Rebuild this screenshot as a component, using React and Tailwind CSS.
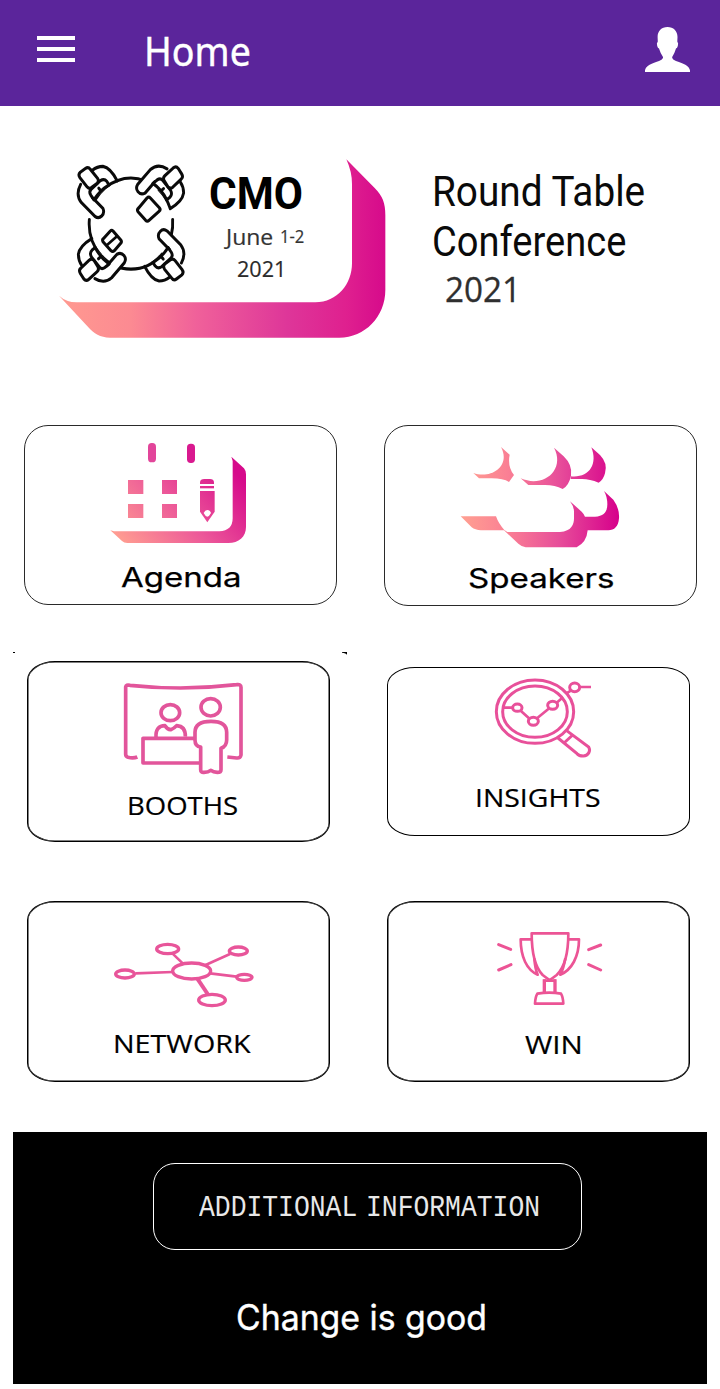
import React, { useLayoutEffect, useRef, useState } from 'react';
import clsx from 'clsx';

// Single line of text stretched or squeezed to the width of its box
function FitText({ className, children }) {
  const boxRef = useRef(null);
  const textRef = useRef(null);
  const [ratio, setRatio] = useState(1);

  useLayoutEffect(() => {
    setRatio(boxRef.current.getBoundingClientRect().width / textRef.current.offsetWidth);
  }, []);

  return (
    <div ref={boxRef} className={clsx('whitespace-nowrap', className)}>
      <span ref={textRef} className="inline-block origin-left" style={{ transform: `scaleX(${ratio})` }}>
        {children}
      </span>
    </div>
  );
}

function Header() {
  return (
    <header className="flex h-[106px] items-start bg-[#5b259b]">
      <button type="button" aria-label="Menu" className="mt-9 ml-[37px] flex w-[38px] flex-col gap-[7px]">
        <span className="h-1 bg-white" />
        <span className="h-1 bg-white" />
        <span className="h-1 bg-white" />
      </button>
      <h1 className="mt-[26px] ml-[69px]">
        <FitText className="w-[107px] font-['Noto_Sans',sans-serif] text-[40px] leading-[50px] text-white [-webkit-text-stroke:0.4px]">Home</FitText>
      </h1>
      <svg className="mt-[26px] mr-[29px] ml-auto" width="47" height="47" viewBox="644 26 47 47" fill="#fff">
        <path d="M667.5 27 C661.5 27 657.6 31 657.6 37 L657.8 41.5 Q656.3 43 657.2 46 Q657.8 48 659 48.5 Q660.500 53.500 663 57 V58 Q662 60 659 61 C651 63.500 645.5 66 645 70.5 V72 H690 V70.5 C689.5 66 684 63.500 676 61 Q673 60 672.200 58 V57 Q674.5 53.500 676 48.5 Q677.2 48 677.8 46 Q678.7 43 677.3 41.5 L677.5 37 C677.5 31 673.5 27 667.5 27Z" />
      </svg>
    </header>
  );
}

function Hand({ turn }) {
  return (
    <g transform={turn}>
      <path d="M-121 -154 Q-106 -165 -88 -165 Q-64 -161 -43 -123" />
      <path d="M-158 -113 C-169 -94 -168 -76 -156 -61 L-113 -21 C-98 -11 -80 -26 -88 -44 L-121 -75" fill="#fff" />
      <path d="M-116 -69 L-126 -82 Q-133 -92 -125 -99 L-96 -124 Q-84 -131 -76 -122 L-69 -112" fill="#fff" />
      <path d="M-116 -69 Q-98 -96 -69 -112" />
      <path d="M-101 -102 L-95 -95" />
      <path d="M-159 -148 L-143 -159 Q-134 -165 -128 -157 L-105 -131 Q-99 -123 -106 -116 L-124 -104 Q-132 -99 -138 -106 L-160 -132 Q-167 -141 -159 -148Z" fill="#fff" />
    </g>
  );
}

function RoundTableLogo() {
  return (
    <svg width="112" height="122" viewBox="75 38 336 366" fill="none" stroke="#0a0a0a" strokeWidth="9" strokeLinecap="round" strokeLinejoin="round">
      <g transform="translate(243 220) scale(0.957 1.042)">
        <path d="M-110 -72 A131 131 0 0 1 45 -123" />
        <path d="M88 -97 A131 131 0 0 1 122 -46" />
        <path d="M130.500 -12 A131 131 0 0 1 126 34" />
        <path d="M97 88 A131 131 0 0 1 -97 88" />
        <path d="M-130.500 -12 A131 131 0 0 0 -97 88" />
        <Hand />
        <Hand turn="rotate(90)" />
        <Hand turn="rotate(180)" />
        <Hand turn="rotate(270)" />
      </g>
      <path d="M291 143 Q296 138 301 143 L328 172 Q333 178 327 183 L297 210 Q292 215 287 210 L264 184 Q260 178 266 173Z" />
      <path d="M181 242 Q185 238 189 242 L213 270 Q216 275 212 279 L193 301 Q188 306 183 301 L159 274 Q156 269 160 265Z" />
      <path d="M172 283 L201 258" strokeWidth="8" />
    </svg>
  );
}

function Banner() {
  return (
    <section className="flex h-[319px] items-start pt-[49px] pl-[55px]">
      <div className="relative flex h-[190px] w-[336px] items-start">
        <svg className="absolute top-0 left-0" width="336" height="190" viewBox="15 15 1008 570">
          <defs>
            <linearGradient id="banner" gradientUnits="userSpaceOnUse" x1="27" y1="0" x2="1006" y2="0">
              <stop offset="0" stopColor="#ff9a90" />
              <stop offset="0.22" stopColor="#fc8a92" />
              <stop offset="0.42" stopColor="#f0619a" />
              <stop offset="0.7" stopColor="#de3699" />
              <stop offset="0.88" stopColor="#df208f" />
              <stop offset="1" stopColor="#d60a8b" />
            </linearGradient>
          </defs>
          <path fill="url(#banner)" d="M27 437 Q48 456 80 457 H796 C862 457 906 402 906 340 V102 Q906 65 889 28 L974 114 C998 138 1006 160 1006 195 V420 C1006 500 945 563 868 563 H180 C150 563 132 551 115 532Z" />
        </svg>
        <div className="relative mt-[8px] ml-5">
          <RoundTableLogo />
        </div>
        <div className="relative mt-4 ml-[22px]">
          <FitText className="w-[94px] font-[Roboto,sans-serif] text-[45px] leading-[46px] font-bold text-black">CMO</FitText>
          <div className="ml-[17px] flex h-8 items-start text-[#333]">
            <FitText className="mt-[4px] w-[47px] font-['Open_Sans',sans-serif] text-[22px] leading-[30px] [-webkit-text-stroke:0.2px]">June</FitText>
            <FitText className="mt-[4px] ml-[7px] w-[24px] font-['Open_Sans',sans-serif] text-[18px] leading-[31px] [-webkit-text-stroke:0.2px]">1-2</FitText>
          </div>
          <FitText className="mt-[4px] ml-[28px] w-[49px] font-['Open_Sans',sans-serif] text-[22px] leading-[30px] text-[#2b2b2b] [-webkit-text-stroke:0.2px]">2021</FitText>
        </div>
      </div>
      <div className="mt-[12px] ml-[41px] text-[#0a0a0a]">
        <FitText className="w-[213px] font-[Roboto,sans-serif] text-[42px] leading-[50px]">Round Table</FitText>
        <FitText className="w-[194px] font-[Roboto,sans-serif] text-[42px] leading-[50px]">Conference</FitText>
        <FitText className="ml-[13px] w-[76px] font-['Open_Sans',sans-serif] text-[35px] leading-[44px] text-[#2f2f2f] [-webkit-text-stroke:0.3px]">2021</FitText>
      </div>
    </section>
  );
}

function AgendaIcon({ className }) {
  return (
    <svg className={className} width="144" height="107" viewBox="288 75 432 321">
      <defs>
        <linearGradient id="agenda" gradientUnits="userSpaceOnUse" x1="340" y1="390" x2="640" y2="130">
          <stop offset="0" stopColor="#ff9d91" />
          <stop offset="0.5" stopColor="#ec5799" />
          <stop offset="1" stopColor="#d60a8b" />
        </linearGradient>
      </defs>
      <g fill="url(#agenda)">
        <rect x="414" y="84" width="24" height="58" rx="11" fill="#e2459a" />
        <rect x="531" y="86" width="24" height="58" rx="11" fill="#d9198f" />
        <rect x="354" y="195" width="46" height="42" />
        <rect x="456" y="195" width="45" height="42" />
        <rect x="354" y="267" width="46" height="42" />
        <rect x="456" y="267" width="45" height="42" />
        <path d="M570 207 V202 Q571 192 583 192 H600 Q611 192 612 202 V207Z" />
        <rect x="570" y="213" width="42" height="7" />
        <path d="M570 228 H614 V290 L592 322 L570 290Z" />
        <path d="M664 125 L702 160 Q708 167 708 178 V336 C708 366 686 384 655 384 H352 Q342 384 336 378 L301 346 L312 349 H628 Q668 347 668 310 V138 Z" />
      </g>
      <path d="M592 285 Q600 285 603 294 Q598 304 592 305 Q586 304 581 294 Q585 285 592 285Z" fill="#fff" />
    </svg>
  );
}

function SpeakersIcon({ className }) {
  return (
    <svg className={className} width="162" height="104" viewBox="252 90 486 312">
      <defs>
        <linearGradient id="speakers" gradientUnits="userSpaceOnUse" x1="257" y1="0" x2="732" y2="0">
          <stop offset="0" stopColor="#ffa091" />
          <stop offset="0.3" stopColor="#fa7f94" />
          <stop offset="0.62" stopColor="#e74e9a" />
          <stop offset="1" stopColor="#d6008b" />
        </linearGradient>
      </defs>
      <g fill="url(#speakers)">
        <path d="M378 96 L404 119 Q397 155 417 180 L402 201 Q385 190 350 190 H312 L295 174 C350 193 408 152 378 96Z" />
        <path d="M537 98 L566 124 Q593 150 588 182 Q582 211 563 222 Q540 210 510 210 H460 L437 190 C505 220 572 165 537 98Z" />
        <path d="M649 97 L675 120 Q699 145 690 175 Q685 195 671 203 Q640 190 615 192 H587 V184 C640 190 670 150 649 97Z" />
        <path d="M257 304 H363 Q370 325 388 345 L397 351 H555 C590 349 597 328 597 310 V290 Q597 275 585 259 L620 290 Q627 297 630 305 H660 C690 304 697 286 697 268 Q697 245 687 228 L715 254 Q734 280 732 310 C730 335 718 346 700 346 H638 Q635 382 605 397 H452 Q440 395 430 386 L387 346 H318 Q300 345 290 337Z" />
      </g>
    </svg>
  );
}

function BoothsIcon({ className }) {
  return (
    <svg className={className} width="122" height="95" viewBox="336 108 366 285" fill="none" stroke="#e2559b" strokeWidth="11" strokeLinejoin="round">
      <path d="M382 336 Q370 341 354 337 Q347 335 347 328 V126 Q348 118 360 121 Q520 138 680 119 Q693 117 693 127 V330 Q691 340 680 339 L652 336" />
      <ellipse cx="481" cy="203" rx="28" ry="24" />
      <path d="M438 277 Q436 242 465 242 Q472 253 482 254 Q493 250 500 242 Q527 244 526 275" />
      <path d="M568 354 H399 V280 H552" />
      <ellipse cx="602" cy="187" rx="29" ry="26" />
      <path d="M603 229 C568 229 555 242 555 262 V285 Q555 304 572 306 V374 Q572 383 582 382 Q595 382 602 376 Q610 382 622 382 Q633 382 633 374 V310 Q650 304 650 285 V262 C650 242 638 229 603 229Z" />
    </svg>
  );
}

function InsightsIcon({ className }) {
  return (
    <svg className={className} width="100" height="82" viewBox="354 66 300 246" fill="none" stroke="#e8509a" strokeWidth="9">
      <ellipse cx="480" cy="170" rx="116" ry="95" />
      <ellipse cx="480" cy="170" rx="97" ry="77" />
      <ellipse cx="427" cy="158" rx="14" ry="11" />
      <ellipse cx="475" cy="199" rx="15" ry="12" />
      <ellipse cx="533" cy="151" rx="15" ry="12" />
      <ellipse cx="599" cy="97" rx="15" ry="13" />
      <path d="M385 158 H412 M437 167 L462 190 M487 189 L521 161 M545 143 L564 127 M574 115 L589 106 M614 96 H648" strokeWidth="8" />
      <path d="M549 249 L606 296 Q612 303 625 303 C640 302 648 288 641 276 L575 227 M567 264 L593 240" />
    </svg>
  );
}

function NetworkIcon({ className }) {
  return (
    <svg className={className} width="144" height="68" viewBox="306 153 432 204" fill="none" stroke="#e8559a" strokeWidth="10">
      <ellipse cx="545" cy="243" rx="57" ry="24" />
      <ellipse cx="473" cy="177" rx="33" ry="14" />
      <ellipse cx="685" cy="183" rx="27" ry="12" />
      <ellipse cx="345" cy="252" rx="28" ry="12" />
      <ellipse cx="703" cy="262" rx="23" ry="9" />
      <ellipse cx="606" cy="330" rx="40" ry="17" />
      <path d="M487 190 L519 221 M585 226 L660 192 M376 250 L488 246 M600 250 L680 260" strokeWidth="8" />
      <path d="M562 266 L595 315" strokeWidth="12" />
    </svg>
  );
}

function TrophyIcon({ className }) {
  return (
    <svg className={className} width="110" height="77" viewBox="360 120 330 231" fill="none" stroke="#ec5495" strokeWidth="8" strokeLinejoin="round">
      <path d="M470 130 H580 C580 180 572 230 545 255 Q535 263 524 270 Q513 263 503 255 C478 230 470 180 470 130Z" />
      <path d="M470 148 H437 C437 200 455 240 488 254 Q480 235 478 205" />
      <path d="M580 148 H612 C612 200 590 240 556 254 Q566 235 571 205" />
      <path d="M508 268 V308 M540 268 V308" strokeWidth="10" />
      <path d="M505 272 H543" />
      <path d="M487 311 Q523 305 558 311 Q564 320 565 341 H480 Q481 320 487 311Z" />
      <path d="M371 164 L407 178 M371 240 L408 224 M677 165 L641 179 M677 240 L641 224" strokeWidth="9" strokeLinecap="round" />
    </svg>
  );
}

function Card({ className, children }) {
  return <button type="button" className={clsx('flex flex-col items-start border bg-white text-left text-black', className)}>{children}</button>;
}

function App() {
  return (
    <div className="h-[1389px] w-[720px] overflow-hidden bg-white">
      <Header />
      <Banner />

      <div className="flex items-start gap-[47px] pl-6">
        <Card className="h-[180px] w-[313px] rounded-[24px] border-[#2a2a2a]">
          <AgendaIcon className="mt-[14px] ml-[81px]" />
          <FitText className="mt-[15px] ml-[96px] w-[121px] font-[Inter,sans-serif] text-[27px] leading-[32px] [-webkit-text-stroke:0.25px]">Agenda</FitText>
        </Card>
        <Card className="h-[181px] w-[313px] rounded-[24px] border-[#2a2a2a]">
          <SpeakersIcon className="mt-[19px] ml-[74px]" />
          <FitText className="mt-[13px] ml-[83px] w-[146px] font-[Inter,sans-serif] text-[27px] leading-[33px] [-webkit-text-stroke:0.25px]">Speakers</FitText>
        </Card>
      </div>

      {/* corner marks above the booths card */}
      <div className="mt-[46px] ml-[13px] flex h-1 w-[334px] items-start justify-between">
        <span className="h-px w-[2px] bg-black" />
        <svg width="5" height="3" viewBox="0 0 5 3">
          <path d="M0 0 H5 V3 Q4 1 0 0.800Z" />
        </svg>
      </div>

      <div className="mt-[5px] flex items-start gap-[57px] pl-[27px]">
        <Card className="h-[181px] w-[303px] rounded-[28px/19px] border-black shadow-[inset_0_0_0_0.5px_#000]">
          <BoothsIcon className="mt-[19px] ml-[94px]" />
          <FitText className="mt-[14px] ml-[99px] w-[111px] font-['Open_Sans',sans-serif] text-[26px] leading-[30px] [-webkit-text-stroke:0.2px]">BOOTHS</FitText>
        </Card>
        <Card className="mt-[6px] h-[169px] w-[303px] rounded-[28px/18px] border-black">
          <InsightsIcon className="mt-[9px] ml-[105px]" />
          <FitText className="mt-[23px] ml-[87px] w-[126px] font-['Open_Sans',sans-serif] text-[25px] leading-[30px] [-webkit-text-stroke:0.2px]">INSIGHTS</FitText>
        </Card>
      </div>

      <div className="mt-[59px] flex items-start gap-[57px] pl-[27px]">
        <Card className="h-[181px] w-[303px] rounded-[28px/19px] border-black shadow-[inset_0_0_0_0.5px_#000]">
          <NetworkIcon className="mt-[39px] ml-[84px]" />
          <FitText className="mt-[19px] ml-[85px] w-[138px] font-['Open_Sans',sans-serif] text-[26px] leading-[30px] [-webkit-text-stroke:0.2px]">NETWORK</FitText>
        </Card>
        <Card className="h-[181px] w-[303px] rounded-[28px/19px] border-black shadow-[inset_0_0_0_0.5px_#000]">
          <TrophyIcon className="mt-[28px] ml-[107px]" />
          <FitText className="mt-[22px] ml-[137px] w-[58px] font-['Open_Sans',sans-serif] text-[26px] leading-[30px] [-webkit-text-stroke:0.2px]">WIN</FitText>
        </Card>
      </div>

      <footer className="mt-[50px] ml-[13px] h-[252px] w-[694px] bg-black pt-[31px] text-white">
        <button type="button" className="ml-[140px] flex h-[87px] w-[429px] items-start rounded-[22px] border border-white pt-[26px] pl-[45px] text-left">
          <FitText className="w-[341px] font-['Liberation_Mono',monospace] text-[30px] leading-[37px] text-[#e8e8e8] [word-spacing:-8px]">ADDITIONAL INFORMATION</FitText>
        </button>
        <FitText className="mt-[47px] ml-[223px] w-[251px] font-[Inter,sans-serif] text-[35px] leading-[40px] [-webkit-text-stroke:0.4px]">Change is good</FitText>
      </footer>
    </div>
  );
}

export default App;
